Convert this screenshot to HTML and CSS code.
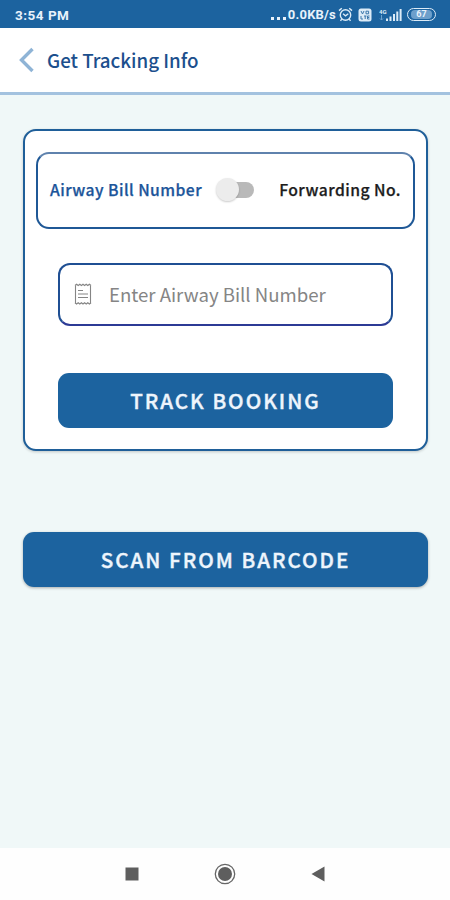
FILE: index.html
```
<!DOCTYPE html>
<html lang="en">
<head>
    <meta charset="UTF-8">
    <meta name="viewport" content="width=device-width, initial-scale=1.0">
    <title>Get Tracking Info</title>
    <link rel="stylesheet" href="styles.css">
</head>
<body>
    <div class="status-bar">
        <span class="time">3:54 PM</span>
        <div class="status-icons">
            <span class="dots"><i></i><i></i><i></i></span>
            <span class="speed">0.0KB/s</span>
            <svg class="alarm" width="15" height="15" viewBox="0 0 15 15" fill="none" stroke="#dcebf7" stroke-width="1.4">
                <circle cx="7.5" cy="8" r="5.2"/>
                <path d="M1 3.6L3.8 1.2M14 3.6L11.2 1.2M5 6.8l2.5 2 2.8-2M3.7 12.2l-1.2 1.6M11.3 12.2l1.2 1.6"/>
            </svg>
            <svg class="volte" width="14" height="14" viewBox="0 0 14 14">
                <rect x="0.5" y="0.5" width="13" height="13" rx="2.5" fill="#dcebf7"/>
                <path d="M3 3l1.5 3L6 3M8 3.2h2.6v2.6H8zM3 8v3h2M6 8h2.5M7.2 8v3M11.5 8H9.5v3h2M9.5 9.5h1.8" fill="none" stroke="#3d78ac"/>
            </svg>
            <svg class="signal" width="23" height="14" viewBox="0 0 23 14">
                <text x="0" y="5.5" class="signal-text">4G</text>
                <path d="M2.5 7v5M1 10.5l1.5 1.5L4 10.5" fill="none" stroke="#6fa3cf"/>
                <path d="M7 10.5h2V13H7zM10.5 8.5h2V13h-2zM14 6h2v7h-2zM17.3 3.5h2V13h-2zM20.6 1h2v12h-2z" fill="#dcebf7"/>
            </svg>
            <span class="battery"><span class="battery-level">67</span></span>
        </div>
    </div>

    <header class="header">
        <svg class="back" width="16" height="26" viewBox="0 0 16 26" fill="none" stroke="#8fb4d6" stroke-width="3.4">
            <path d="M14.500 2L3.500 13l11 11"/>
        </svg>
        <h1 class="title">Get Tracking Info</h1>
    </header>

    <main class="content">
        <div class="card">
            <div class="toggle-box">
                <span class="toggle-label active">Airway Bill Number</span>
                <span class="switch"></span>
                <span class="toggle-label">Forwarding No.</span>
            </div>
            <div class="input-box">
                <svg class="note" width="18" height="22" viewBox="0 0 18 22" fill="none" stroke="#858585">
                    <path d="M1.5 20.5v-18M16.5 20.5v-18" stroke-width="1.1"/>
                    <path d="M1 2.5l1.6-1.3 1.6 1.3 1.6-1.3 1.6 1.3L9 1.2l1.6 1.3 1.6-1.3 1.6 1.3 1.6-1.3L17 2.5M1 19.8l1.6 1.2 1.6-1.2L5.8 21l1.6-1.2L9 21l1.6-1.2 1.6 1.2 1.6-1.2 1.6 1.2 1.6-1.2" stroke-width="1.1"/>
                    <path d="M4 7.5h5M4 11h10M4 14.5h10"/>
                </svg>
                <span class="placeholder">Enter Airway Bill Number</span>
            </div>
            <button class="btn btn-track">TRACK BOOKING</button>
        </div>
        <button class="btn btn-scan">SCAN FROM BARCODE</button>
    </main>

    <nav class="nav-bar">
        <svg width="14" height="14" viewBox="0 0 14 14"><rect x="0.5" y="0.5" width="13" height="13" fill="#5e5e5e"/></svg>
        <svg width="22" height="22" viewBox="0 0 22 22">
            <circle cx="11" cy="11" r="9.7" fill="none" stroke="#666" stroke-width="1.3"/>
            <circle cx="11" cy="11" r="7" fill="#5e5e5e"/>
        </svg>
        <svg width="14" height="16" viewBox="0 0 14 16"><path d="M13.5 0.5v15L0.5 8z" fill="#5e5e5e"/></svg>
    </nav>
</body>
</html>
```
FILE: styles.css
```
* {
    box-sizing: border-box;
}
body {
    margin: 0;
    height: 900px;
    display: flex;
    flex-direction: column;
    overflow: hidden;
    background-color: #f0f8f8;
    font-family: "Noto Sans CJK SC", "Noto Sans", sans-serif;
}
.status-bar {
    height: 28px;
    padding: 1px 14px 0 15px;
    display: flex;
    align-items: center;
    justify-content: space-between;
    background-color: #1c639f;
    color: #e8f2fb;
    font-family: Roboto, sans-serif;
    font-weight: 700;
}
.time {
    font-size: 13.5px;
    letter-spacing: 0.5px;
}
.status-icons {
    display: flex;
    align-items: center;
}
.dots {
    display: flex;
    gap: 3px;
    margin: 7px 2px 0 0;
}
.dots i {
    width: 3px;
    height: 3px;
    background-color: #e8f2fb;
}
.speed {
    font-size: 13px;
    letter-spacing: 0.2px;
}
.alarm {
    margin-left: 2px;
}
.volte {
    margin-left: 5px;
}
.signal {
    margin-left: 7px;
}
.signal-text {
    font-size: 6px;
    fill: #dcebf7;
}
.battery {
    width: 29px;
    height: 13px;
    margin-left: 5px;
    padding: 1px 3px;
    border: 1.5px solid #dcebf7;
    border-radius: 7px;
}
.battery-level {
    display: block;
    height: 9px;
    border-radius: 4px;
    background-color: #6d9fcb;
    font-size: 9px;
    line-height: 9px;
    text-align: center;
}

.header {
    height: 67px;
    padding-left: 18px;
    display: flex;
    align-items: center;
    background-color: #fff;
    border-bottom: 3px solid #a3c2df;
}
.title {
    margin: 0 0 0 13px;
    font-size: 18.75px;
    font-weight: 500;
    line-height: 28px;
    color: #1c4f8d;
}

.content {
    flex: 1;
    padding: 34px 22px 0 23px;
}
.card {
    height: 322px;
    padding: 21px 11px 0 11px;
    background-color: #fff;
    border: 2px solid #1f5f99;
    border-radius: 13px;
    box-shadow: 0 1px 3px rgba(0, 0, 0, 0.2);
}
.toggle-box {
    height: 77px;
    padding: 0 12px 2px 12px;
    display: flex;
    align-items: center;
    border: 2px solid #1f5896;
    border-top-color: #5f82ad;
    border-radius: 13px;
}
.toggle-label {
    font-size: 15.7px;
    font-weight: 500;
    line-height: 24px;
    letter-spacing: 0.45px;
    white-space: nowrap;
    color: #1c1c1c;
    -webkit-text-stroke: 0.25px;
}
.toggle-label:last-child {
    margin-left: auto;
}
.toggle-label.active {
    color: #1c559a;
}
.switch {
    position: relative;
    width: 38px;
    height: 24px;
    margin-left: 14px;
    display: flex;
    align-items: center;
    justify-content: flex-end;
}
.switch::before {
    content: "";
    width: 30px;
    height: 16px;
    border-radius: 8px;
    background-color: #b9b9b9;
}
/* knob sits over the track */
.switch::after {
    content: "";
    position: absolute;
    left: 0;
    top: 0;
    width: 23px;
    height: 23px;
    border-radius: 50%;
    background-color: #ececec;
    box-shadow: 0 1px 2px rgba(0, 0, 0, 0.2);
}
.input-box {
    height: 63px;
    margin: 34px 22px 0 22px;
    padding: 0 0 1px 14px;
    display: flex;
    align-items: center;
    border: 2px solid #1f4f93;
    border-bottom-color: #2c3a95;
    border-radius: 12px;
}
.placeholder {
    margin-left: 17px;
    font-size: 18.6px;
    line-height: 28px;
    white-space: nowrap;
    color: #858585;
}
.btn {
    display: block;
    height: 55px;
    padding: 0 0 2px;
    border: none;
    border-radius: 11px;
    background-color: #1c639f;
    color: #eef5fc;
    font-family: inherit;
    font-size: 20.6px;
    font-weight: 500;
    letter-spacing: 2px;
    white-space: nowrap;
    -webkit-text-stroke: 0.4px;
}
.btn-track {
    width: 335px;
    margin: 47px 0 0 22px;
}
.btn-scan {
    width: 100%;
    margin-top: 81px;
    box-shadow: 0 1px 3px rgba(0, 0, 0, 0.3);
}

.nav-bar {
    height: 52px;
    padding: 0 125px;
    display: flex;
    align-items: center;
    justify-content: space-between;
    background-color: #fefefe;
}
```
